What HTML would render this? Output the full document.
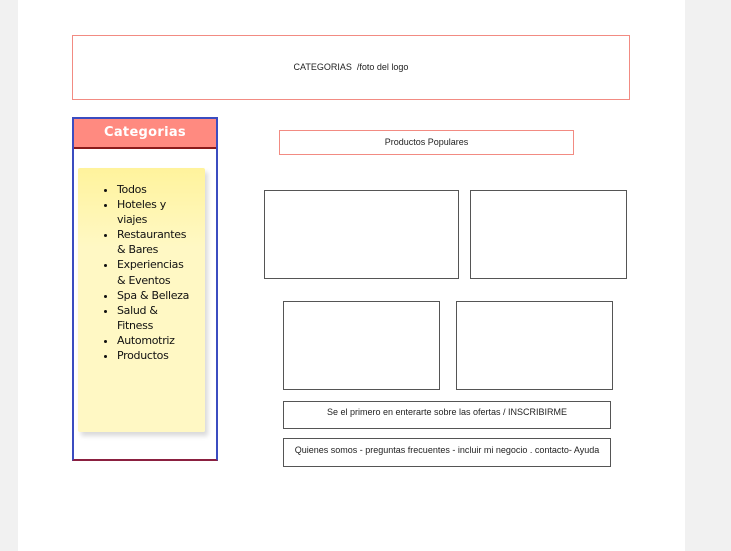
<!DOCTYPE html>
<html><head><style>
body{margin:0;width:731px;height:551px;background:#f1f1f1;position:relative;overflow:hidden;font-family:"Liberation Sans",Arial,sans-serif}
.page{position:absolute;left:18px;top:0;width:667px;height:551px;background:#fff}
.b{position:absolute;box-sizing:border-box;border:1px solid #555;text-align:center;font-size:9px;color:#222}
</style></head><body>
<div class="page"></div>
<div class="b" style="left:72px;top:35px;width:558px;height:65px;border-color:#f28b82;line-height:63px">CATEGORIAS &nbsp;/foto del logo</div>
<div class="b" style="left:279px;top:130px;width:295px;height:25px;border-color:#f28b82;line-height:23px">Productos Populares</div>
<div class="b" style="left:264px;top:190px;width:195px;height:89px"></div>
<div class="b" style="left:470px;top:190px;width:157px;height:89px"></div>
<div class="b" style="left:283px;top:301px;width:157px;height:89px"></div>
<div class="b" style="left:456px;top:301px;width:157px;height:89px"></div>
<div class="b" style="left:283px;top:401px;width:328px;height:28px;line-height:20px">Se el primero en enterarte sobre las ofertas / INSCRIBIRME</div>
<div class="b" style="left:283px;top:438px;width:328px;height:29px;line-height:22px">Quienes somos - preguntas frecuentes - incluir mi negocio . contacto- Ayuda</div>
<div style="position:absolute;left:72px;top:117px;width:146px;height:344px;box-sizing:border-box;border:2px solid #3b4cc0;border-bottom-color:#8b2040">
 <div style="height:28px;background:#ff8a80;border-bottom:2px solid #8b1a1a;color:#fff;font-weight:bold;font-size:13px;letter-spacing:0.3px;text-align:center;line-height:28px;font-family:'DejaVu Sans',sans-serif">Categorias</div>
 <div style="position:absolute;left:4px;top:49px;width:127px;height:264px;background:linear-gradient(#fff39c,#fff8c4 30%,#fff8c4);border-radius:2px;box-shadow:3px 4px 5px rgba(0,0,0,.15)">
  <ul style="margin:0;padding:0 0 0 39px;position:absolute;top:14px;font-size:11px;line-height:15.1px;color:#111;font-family:'DejaVu Sans',sans-serif;letter-spacing:-0.3px;width:75px">
   <li>Todos</li><li>Hoteles y viajes</li><li>Restaurantes &amp; Bares</li><li>Experiencias &amp; Eventos</li><li>Spa &amp; Belleza</li><li>Salud &amp; Fitness</li><li>Automotriz</li><li>Productos</li>
  </ul>
 </div>
</div>
</body></html>
